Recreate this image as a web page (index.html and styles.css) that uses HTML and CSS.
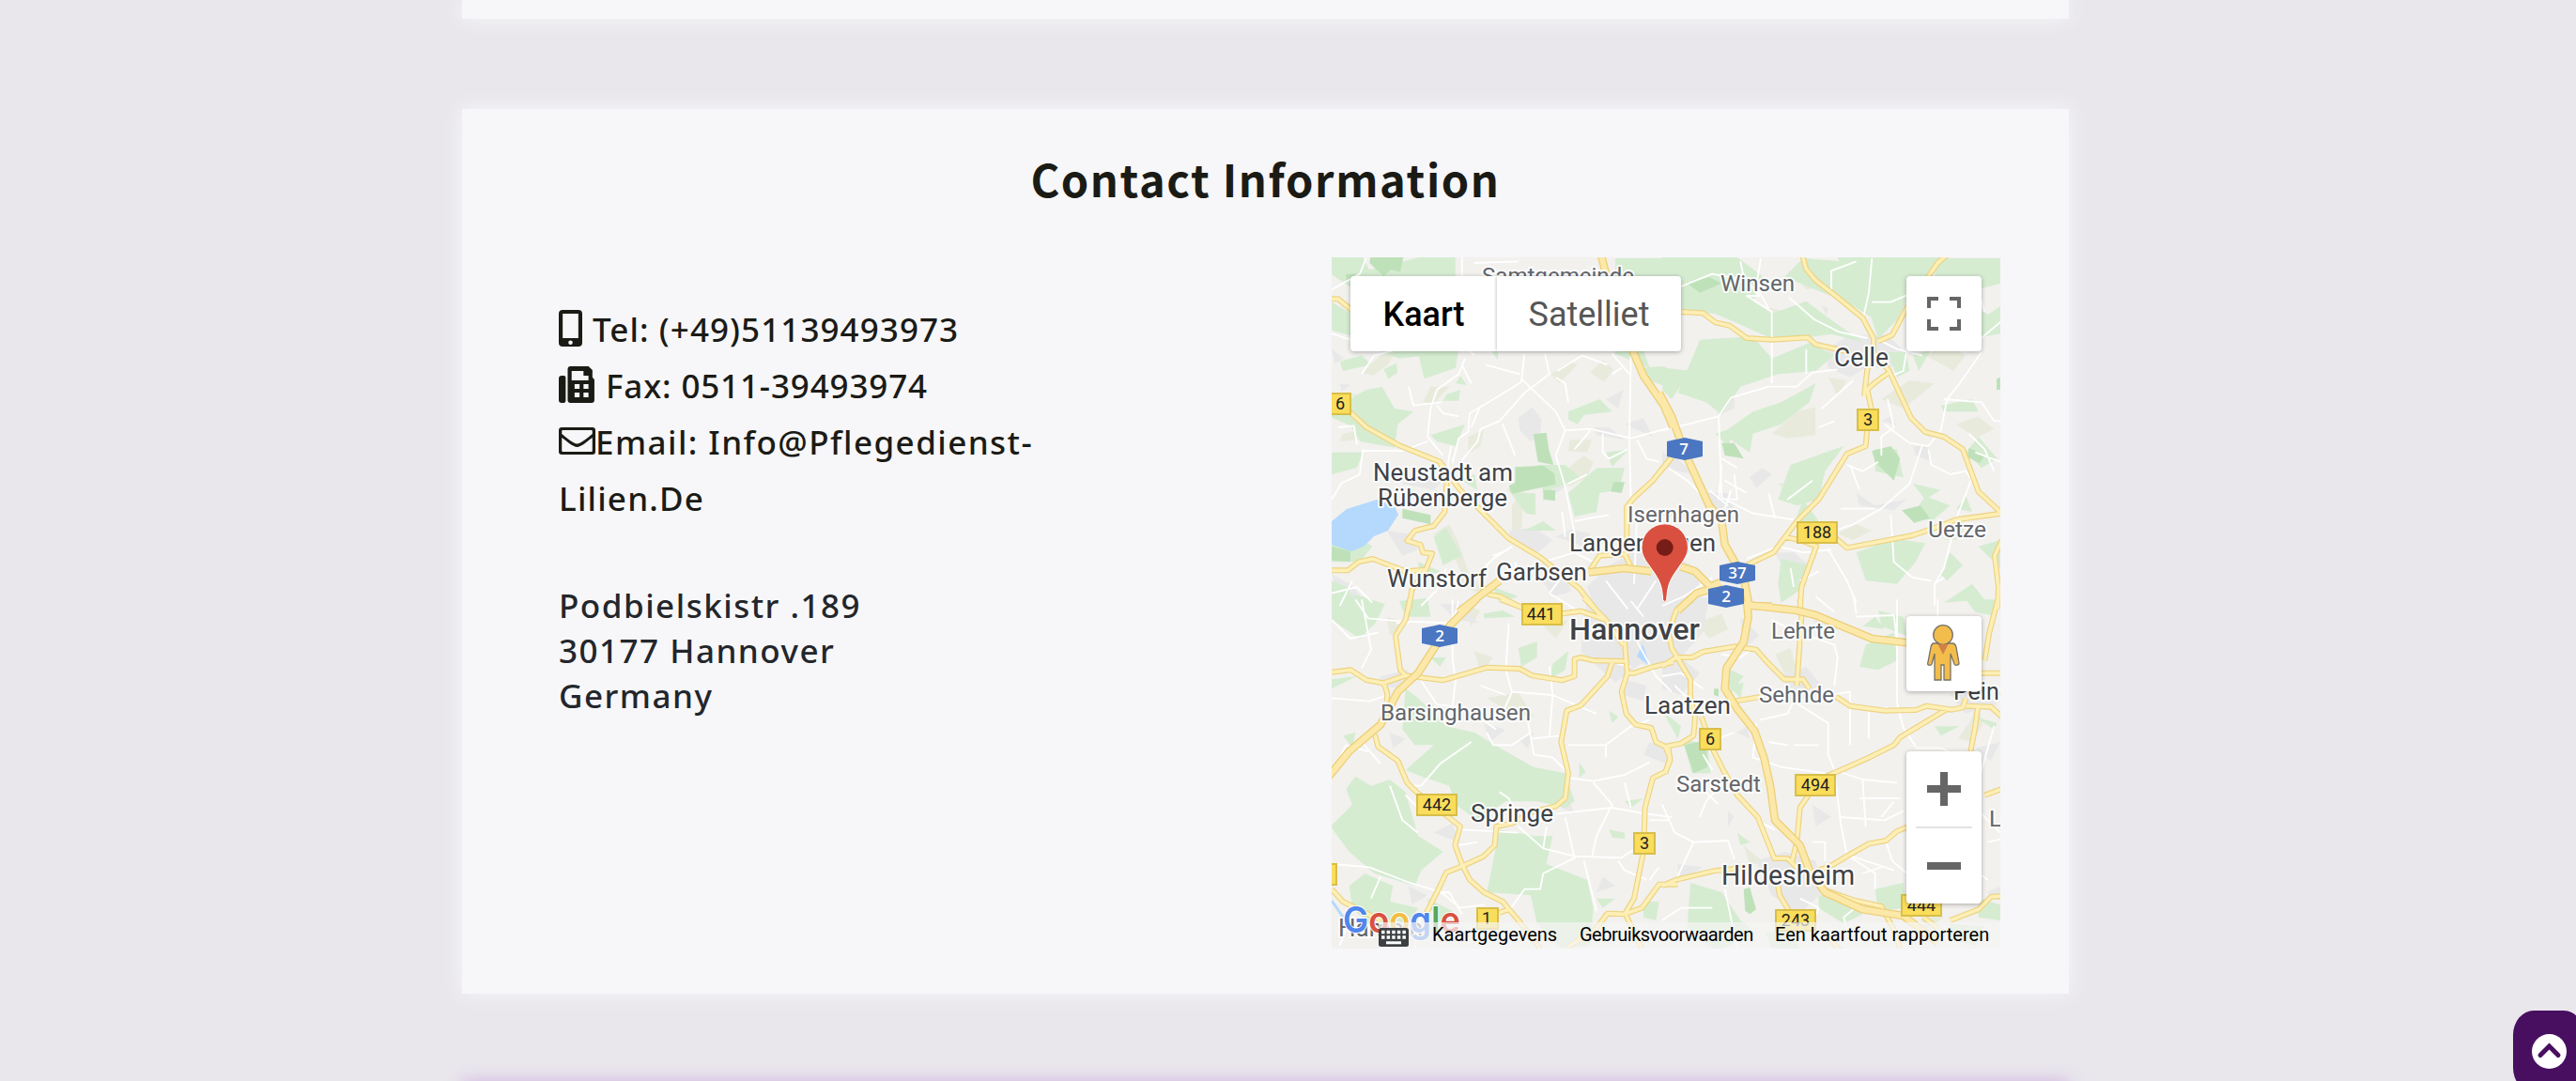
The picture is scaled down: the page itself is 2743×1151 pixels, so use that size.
FILE: index.html
```html
<!DOCTYPE html>
<html lang="en">
<head>
<meta charset="utf-8">
<title>Contact Information</title>
<link rel="stylesheet" href="styles.css">
</head>
<body>
<main class="page">
<section class="card card-previous"></section>
<section class="card card-contact">
<h2 class="title">Contact Information</h2>
<div class="columns">
<div class="details">
<p class="line tel"><svg class="icon" width="25" height="39" viewBox="0 0 24 39" preserveAspectRatio="none"><path fill-rule="evenodd" d="M4 0h16q4 0 4 4v31q0 4-4 4H4q-4 0-4-4V4q0-4 4-4zm0 4v26h16V4zm8 28.500a2.200 2.200 0 1 0 0 4.400 2.200 2.200 0 0 0 0-4.400z"/></svg><span class="tel-text">Tel: (+49)51139493973</span></p>
<p class="line fax"><svg class="icon" width="39" height="39" viewBox="0 0 37 39" preserveAspectRatio="none"><path d="M3 10h2q2 0 2 2v24q0 3-2 3H3q-3 0-3-3V13q0-3 3-3z"/><path fill-rule="evenodd" d="M12 0h18l4 4v8q2 1 2 3v21q0 3-3 3H12q-3 0-3-3V3q0-3 3-3zm1 5v10h17V10h-5V5zm3 14v5h5v-5zm9 0v5h5v-5zm-9 9v5h5v-5zm9 0v5h5v-5z"/></svg><span class="fax-text">Fax: 0511-39493974</span></p>
<p class="line mail"><svg class="icon" width="39" height="29" viewBox="0 0 36 29" preserveAspectRatio="none"><path fill-rule="evenodd" d="M3 0h30q3 0 3 3v23q0 3-3 3H3q-3 0-3-3V3q0-3 3-3zm1 3q-1 0-1 1v3c4 4 12 10.500 15 10.500S29 11 33 7V4q0-1-1-1zM3 11v14q0 1 1 1h28q1 0 1-1V11c-4 3-11 10-15 10S7 14 3 11z"/></svg><span class="mail-text">Email: Info@Pflegedienst-</span></p>
<p class="line host">Lilien.De</p>
<address class="address"><span class="street">Podbielskistr .189</span><br><span class="city">30177 Hannover</span><br><span class="country">Germany</span></address>
</div>
<div class="map">
<svg class="map-canvas" width="712" height="736" viewBox="0 0 712 736">
<defs>
<g id="main-roads">
<g transform="translate(-8 -9) scale(.33333)">
<path d="M0 160H45L100 205M60 500L135 570 240 628 370 680 430 765 590 925 690 985 815 1085 890 1180M370 680L392 740 385 840 350 885 290 900 265 932 308 945 315 970 345 973 325 1025 260 1030 155 990 110 1000 75 1027H0M325 1025L280 1090 270 1150M500 1075L530 1105 560 1110 640 1150M850 1025L880 980 960 975 980 1015M968 975L966 825 990 795 1050 740 1110 665"/>
</g>
<g transform="translate(352 -9) scale(.33333)">
<path d="M45 200L130 205 170 235 215 245 270 285 350 290 465 283 490 305 600 330M445 10L460 65 490 100 560 155 640 220 675 285 675 340 655 385 645 470M920 10L880 45 780 190 735 275 690 295M680 335L725 390 795 540 840 585 900 600 960 640 1010 775 1085 845 940 865 860 895 800 915 590 955 550 920M725 395L700 412 670 435 655 450 668 510 655 570 650 630 590 655 500 800 430 870 355 970 270 1010M390 920L440 930 492 950 445 1080 440 1150M1085 930L1062 980 1074 1080 1072 1150M-10 715L40 655"/>
</g>
<g transform="translate(-8 366) scale(.33333)">
<path d="M275-10L260 60 228 110 243 220 260 238 190 262 135 252 85 220 0 230M260 238L380 253 520 212 625 216 665 238 760 253 800 240 800 185 820 180 860 190 965 192M190 262L202 295 200 320M162 425L172 465 235 510 265 580 295 610 435 720 418 780 442 845 465 890 510 930 570 960 625 1025 690 1110M920 195L905 240 820 333 775 350 757 450 780 550 770 630 740 655 660 675 600 710 550 720 545 780 510 815 445 845 390 867 370 910 325 1000M960 130L968 230 950 290 965 360 995 395 1045 405 1060 450 1100 470 1105 510 1090 545 1050 565 1025 660 1020 800 990 950 960 1000 905 998 870 1045 780 1105M830-10L900 60 955 140M565-5L630 20 760 40 820 32 900 60M24 920L60 960 180 1020M965 1005L1015 1110M590 985L560 995M960 1000L1015 980 1070 905 1130 905M965 230L990 230 1050 210 1115 195"/>
</g>
<g transform="translate(352 366) scale(.33333)">
<path d="M440-5L445 50 430 270M95-5L45 30 20 100 30 150 90 250 90 310 105 370 100 430 60 455 10 465 25 500 10 550M0 208L45 180 95 180 130 162 230 145 300 155 340 200 390 250 450 250 470 280M230 320L320 305M555 305L600 335 710 350 810 348 845 335 925 347 960 340 970 310 M1085 370L1050 338 970 335M1008 340L1000 400 985 480M905 348L760 435 740 460 660 500 570 540 500 570 440 660 430 770 415 830M125 370L165 480 195 540 240 620 305 690 358 822 400 822 430 850M0 910L45 890 165 862 280 850M370 910L375 940 420 1015 M500 860L540 845 590 815 660 775 715 765 750 735 800 715M1085 600L1030 620M1072-5L1045 100 1030 190M1020 230H1085M1085 942L1050 945 1010 985 920 1020M510 920L610 955 700 975 740 1050 760 1110M880 1045L835 1010M520 1060L570 1120"/>
</g>
</g>
<g id="motorways">
<g transform="translate(-8 -9) scale(.33333)"><path d="M880 0L900 80M975 300L1020 405 1085 500 1115 570M430 1160L560 1060M845 1033L960 1020 1045 1030"/></g>
<g transform="translate(352 -9) scale(.33333)"><path d="M-10 460L30 535 72 650 150 820 190 870 200 945 260 1050 280 1150M60 1015L105 1030 155 1080 185 1065M50 1155L110 1100 180 1080M280 1140L350 1142"/></g>
<g transform="translate(-8 366) scale(.33333)"><path d="M490-10L400 80 345 160 300 230 235 290 180 395 80 480 15 560"/></g>
<g transform="translate(352 366) scale(.33333)"><path d="M270 0L275 50 260 130 205 215 200 280 240 345 295 415 325 500 345 590 360 700 440 780 470 860 520 930 640 985 770 1005 880 1090M270 12L430 30 490 45 670 120 800 135"/></g>
</g>
</defs>
<rect width="712" height="736" fill="#f2f1ee"/>

<g class="olive">
<g transform="translate(-8 -9) scale(.33333)"><path d="M30 60l70-35 20 40-60 35zM120 395l60-55 50-15-25 45-50 35zM340 440l60 0-50 55-35-5zM440 320l50-30 60-10-30 40zM725 400l60-40 25 10-60 60zM850 395l40-40 35 30-30 40zM180 500l50 40-50 30zM60 590l70-15 20 30-100 10zM460 600l50-20-10 50-40 25zM785 610l70 0-15 40-60-5zM780 700l50-40 30 20-20 50-60 30zM400 880l30 60 30 90 40 60-50-30-50-110-50-40zM600 820l40-60-10 130-30 20zM130 500l-50-40 70 10zM420 1050l50-10 50 70-50-20z"/></g>
<g transform="translate(352 -9) scale(.33333)"><path d="M20 70l100-25 90 10-80 40zM280 170l110 30-80 40zM350 590l80-70 60-15 0 90-90 10zM700 480l90-60 80 10-100 80zM530 410l60 10-30 50zM420 80l90-20 30 60-80 10zM840 340l70-30 60 30-40 50zM940 560l70-25 50 40-60 30zM370 750l60-10-20 50zM900 930l50-60 30 10-40 50zM560 910l60-30 50 20-60 30zM610 70l60 60-40 60zM0 850l60-20 50 40z"/></g>
<g transform="translate(-8 366) scale(.33333)"><path d="M440 10l60 20-30 50zM200 50l60 20-50 40zM480 160l60 20-40 50zM700 80l80-20-40 60zM520 310l100-20 50 80-70-10zM210 960l60 30-20 40z"/></g>
<g transform="translate(352 366) scale(.33333)"><path d="M110 70l80-30 20 50-60 30zM480 60l90 10-30 50zM260 780l60 50-40 15zM985 380l20-50 20 60-30 60-50-10zM360 170l50-20 20 70-40 10zM820 990l80 20-60 40z"/></g>
</g>
<g class="urban">
<g transform="translate(-8 -9) scale(.33333)"><path d="M620 540l45-35 30 40-5 45-30 25-35-35zM900 480l55-30-15 60zM910 1010l80-40 120 0v190H870l-30-80zM690 1050l80-15 20 60-60 15zM590 900l80-10 60 40-60 50-70-40zM740 920l50-25 60 15-20 40zM200 900l70 10 30 50-50 20zM250 750l40-30 90 20-30 30zM24 320l40 30-30 15zM50 430l35 5-30 20zM740 710l35 45-40 30zM860 570l50 0 50 40-90-15zM960 560l60-20 30 60zM24 1040l60 30 50 60-70 30z"/></g>
<g transform="translate(352 -9) scale(.33333)"><path d="M600 275l120 0 50 50-40 55-80 0-50 30-70-30-5-60zM160 480l70-30 0 60-50 20zM0 650l50 20 50 50-100-20zM140 780l70 0 20 50-70 10zM620 780l60 40 100-20-40 35-110-15zM700 550l30-15 20 30zM800 630l50 0 10 50-50-20zM280 730l40-30 30 20-50 45zM0 960l110 60 20 120H0zM360 970l60 0 50 40-80 20zM510 180l20 10-5 25z"/></g>
<g transform="translate(-8 366) scale(.33333)"><path d="M840-10h290v230l-120-20-80 60-110-100zM370 10l70 0 50 60-70-10zM180 240l90-20-20 60-80-10zM210 420l50 20-40 30zM620 440l50-20-20 50zM960 250l70 20-10 50-60-20zM1040 450l70 30-20 40-70-30zM350 740l60-30 20 60zM740 650l40-20 20 50zM890 880l40 30-60 20zM270 910l60 30-50 30zM510 390l70 20-50 40z"/></g>
<g transform="translate(352 366) scale(.33333)"><path d="M0-10h150l-20 110-70 80 60 50-60 70-60-20zM250 50l60 60-50 40zM370 240l90-30 50 60-80 30zM300 830l90-30 100 30 30 90-80 80-90-60zM50 840l80 10-80 50zM920 300l80-30 70 60-100 30zM480 650l60 40-50 30zM210 670l20 20-20 30zM240 420l30-20 10 40zM1000 470l80-20-30 60zM840 880l60 20-40 30zM1035 930l50-20v50z"/></g>
</g>
<g class="forest">
<g transform="translate(-8 -9) scale(.33333)"><path d="M24 27h100l20 40 160-40h115v80l-110 45-150-60-60 40-75-50zM24 170l60 35 90 100-60-20-90-25zM60 280l110 30 110-40 60 70-100 10zM300 330l130-10-10 60-100 35-10-40zM530 320l25 5 0 30zM120 340l30 30-90 20-10-30zM135 450l50-10 40 70 60 10-50 40-10 75-110-20-30-50-70-30 75-60zM340 595l110-35-30 70-60-15zM390 465l45-15-5 35-50 0zM435 405l20 30-35-5zM190 385l40-20 5 30-30 20zM780 520l100-40 40 40-90 10-20 30-30-15zM585 765l45 15 45 0 0 70-30-5zM680 690l90 0 50 40-120 50zM780 780l90-80 90 0-20 70-60 10-10 60-70 15zM900 650l75-10-55 55zM900 240l90 0 50 140-110-45zM24 650l100 0-20 50-80 20zM1000 380l90-5 20 70-60-20zM930 30h190v100l-100 20-90-40zM24 870l130 80-40 50-90 0zM350 920l40-30 50 90-60 30zM24 1060l50 20 40 80H24zM300 1000l70 30-60 30zM540 1080l80 30-60 20zM640 900l60-30 40 30zM440 740l40-20 10 50z"/></g>
<g transform="translate(352 -9) scale(.33333)"><path d="M0 27h240l80 60-30 80 60 40 110-40 80 60 100 70-100-25-70 10-130 0-80-35-90-40-170-10zM120 290l170-10 60 70 120-50 80 40-60 50-120 10-120 40-60 90-50-40-90-30zM390 90l60-60 120 10 90 80 10 100-80-50zM560 27h330l-100 120-40 80-60 60-30-90-60-70zM880 30h200v80l-150 40-60-60zM980 170l60 40 45-30v90l-110 20zM290 520l90-30 110-60-20 60-90 70-90 30-10 60-90-60zM10 380l80 10-60 90-30-30zM720 330l60 0 10 60-40 20zM800 340l60-20-40 70zM410 690l110-40 60-20-60 80-20 90-70 20-60-20zM680 640l70 0 20 90-90-20zM890 500l100-20 20 40-110 0zM970 650l40-50 60 70-50 30zM800 750l90 20-50 30zM840 790l80 30-60 50-60-20zM620 970l80-30 70-10 70 10-30 60-60 70-100-10-20-60zM380 990l90 20-30 80-60 40-10-60zM920 970l40 40-50 50-20-20zM450 800l50 70-80 10zM940 830l30-40 20 50zM1010 950l70-20v90zM170 590l60-20-20 60zM900 1130l90-60 40 50z"/></g>
<g transform="translate(-8 366) scale(.33333)"><path d="M24 10l80-30 90 30-30 60-50 50-90-60zM240 0l90-10 10 60-80 0zM260 280l40 30 90 90 90 20 100 60 90 50 100 20 30 90-30 20-90-20-100 0-90 60-70-50-20-60-90-30-50-20 90-80-60 0-40-50zM100 560l50 30 60-20 50 40 40 140 80 50-70 60-20 50-130-40-80-70-60-80 70-70-20-50zM560 730l110 20 60 0-20 90 130 50 20 90-10 120-90 10-80-80-20-90-140-10zM80 910l50-40 90 40-10 50 90 20-30 50-130 0-50-50zM870 950l60 0-40 30zM910 350l30 20-20 20zM620 150l60-20 0 50-50 30zM730 200l50-40-10 60-50 30zM510 40l60-10 40 20-100 5zM340 180l50 0-20 30zM60 430l40-10-10 50zM24 250l80-10-80 40zM815 515l20 30-20 20zM960 640l60-10-40 30zM1020 960l50 0-10 60-40-10zM330 950l80 40-50 40zM910 730l50 10 0 20-40-5z"/></g>
<g transform="translate(352 366) scale(.33333)"><path d="M650 140l90-40 10 90-60 30-60-10zM690 30l80 20 10 60-80-30zM200 210l60 30-40 50zM0 350l60 50-10 40zM65 440l80 20 10 90-60 0zM90 900l100 30 60 90 50 40-130 60-90-80zM500 940l90 0 50 60-60 30-80-50zM680 920l90-20 10 80-90 10zM1000 370l70 20-10 20zM870 400l80 0-60 30zM240 740l40 30-30 10zM640 80l40-30 30 40zM330 1060l80-10 30 60h-90zM920 1030l110 10-30 60-80-20zM1010 950l70 20v50l-70-10zM210 270l50-10-10 50zM970-5l100 0-20 50-50-10z"/></g>
</g>
<g class="deep-forest">
<g transform="translate(-8 -9) scale(.33333)"><path d="M148 27h105l-10 47-30-8-23 22-45-43zM668 592l42-5 8 55 15 48-50-10zM610 697l90-5 35 25 5 35-140 30-10-25 20-10zM700 770h38v35l-38-5zM925 745l35 0-10 35-35-5zM250 830l90 20 0 30-90-20zM24 950l60 15 0 35-60-5zM70 80l40 0-40 30z"/></g>
<g transform="translate(352 -9) scale(.33333)"><path d="M670 645l60-15 30 40-20 70-60-60zM190 620l40 0 30 50-60-10zM765 835l60-15 30 40-50 15zM980 635l50 25-15 25-40-20zM80 110l70-20 40 20-70 30zM1068 415l15-5v40l-15 0z"/></g>
<g transform="translate(352 366) scale(.33333)"><path d="M70 460l70-15 5 85-45 20zM260 920l20-5 20 70-20 15-15-10zM165 280l15 0 0 25-15-5z"/></g>
</g>
<g class="water"><path d="M0 281L16 268 48 258 67 265 71 274 60 291 45 297 34 308 21 313 0 306zM325 425l6-13 4 11 4 12z"/><path d="M0 685l5 7 8 12" class="stream"/></g>

<g class="lanes">
<g transform="translate(-8 -9) scale(.33333)"><path d="M24 130l90-50 20-50M24 270l120 40M120 400l40-60 80-20M480 45l140-5M440 90l0-70M450 350l-20 50-70 50-20 60-10 90 50 60M270 440l15 60 90-10M640 335l-10 90-80 50-85 50-5 60-30 20-20 80M630 415l110 105 30 60 80-5 130 30 130-35M720 400l-80 60-80 90-60 25-10 40-50 60M705 335l15 65M980 340l-5 260 5 220M770 580l-30 80 30 100 30 150M515 370l110 30M360 500l20 25 50 10M920 335l55 65M120 645l130 0 80-30M24 800l30-50 60-30 10-80M405 630l-10 60 20 60M570 560l40 100M745 390l80-50 80 30M480 340l-30-30M45 570l50-5 10 60M890 590l0 60 20 20 60-30M1000 610l30 60 40 10M850 580l-50 60M470 570l30-70M800 870l50-10 60-10M700 1000l100-30 60 30M760 840l10 80M600 950l-60 40-80 80M1000 840l-10 230M780 1020l-60 80M24 1100l80-20 50 50M90 1060l-40 80M390 1020l-30 70-50 50M720 1100l80 50M540 980l50-20M740 410l30 20 10 60M840 720l-60 30M920 400l30-20M440 370l30 60M610 1000l10 50M1060 1060l-60 90M900 1060l70 90"/></g>
<g transform="translate(352 -9) scale(.33333)"><path d="M250 40l10 50 50 60-40 0 80 50 0 230M315 30l-15 90 40 70M60 120l100-40 110 20M405 155l80 70 80 40 90 20M670 30l-10 110-20 90M540 130l0-60 80-30M0 580l180-45 40-60 120-35 90 0 50-45 80-10M180 535l10 260 100 50 130 20M690 290l60 30 80 20M780 330l-10 60-50 20M1085 230l-60 50-60 50M1020 330l-70 100-40 50-20 100-40 50-60-10-80-60M830 630l-40 120-90 80-90 50-60 20M610 420l-100 90M460 320l0 80M850 640l10 50 60 30 50-10 20 30M720 480l20 90-40 30 0 60M900 480l120 10 40 60 25 0M270 990l100-40 80 20 90-10M530 960l60 100 30 70M900 1050l-30 20 0 70M990 730l-50 130-40 160-30 50M730 850l10 150 60 50 60 10M20 700l60 40 60 60M200 800l40 0-10-80M190 690l-10 110M400 800l80-60M600 690l30 80M150 770l60 50M570 830l110 0M690 680l-50 30-50-20M980 590l50 50 30 70M1000 650l80 30M0 1140l70-30 90-60M200 830l20-60M360 860l-20-80M440 1060l60-30M550 550l-50 20M1000 100l30 100M800 140l-70 30-60 0M420 1080l-10-60M240 700l-50-30M270 780l-70-40M490 1110l60 50"/></g>
<g transform="translate(-8 366) scale(.33333)"><path d="M24 60l60 60 90-20M100-5l40 60 110 10 160 5 20-70M270 70l-40 0M410-5l0 190 10 70-10 80M300 240l60 90 90 10 100 70M590 70l-10 150 20 70-40 90M600 290l130 10 140 60M720 210l10 90-10 130M650 380l20 110 60 10 40 40M24 310l120 10 60-20M140 480l-70-20-50 100M470 450l-100 70-60 70-30 0M620 720l80 70 100 25 150 5 60-40M710 720l-10 70M770 690l30 130-100 50-10 50-50 0-50 70M780 565l80 10 100-20 80-40M860 580l60 70-50 100-15 70M740 680l180-20 110 20 80 10M24 840l120 10 130 50 100 30 60 50 80-10M360 930l40 0 40 70M830 830l40 160M940 830l20 30 70 30M520 420l20 40 60 0 60-40M660 440l90-10M780 460l120 0 0 40M620 740l-180-10M900 460l80-60 60-20M500 270l80 30M180 880l-30 70M210 590l40 110 50 40M260 620l60 60M980 660l-20-80M120-5l30 160-30 60M1070 850l-30 40M1100 700l-60 0M900 190l80 20M430 780l60-10M180 520l-60-70M560 610l30 20 20 50M310 1000l-20 110M80 1020l-30 80M1000 130l60 110 50 50M980 0l40 50"/></g>
<g transform="translate(352 366) scale(.33333)"><path d="M350 60l60 30 140 50 10 40-10 90M620 50l120-5 10 80 0 200 20 80 40 60M620 40l-10-60M750-5l0 120M310 380l90-20 20-40 110 70 0 100 20 50 20 170 20 100 150 50M300 390l-10 110 90 30 140 20M600 310l0 150M660 440l0-90 60-10M810 470l80 0 90 40M550 540l90 30 110 10M640 570l10 150M570 690l140 10 60-30M630 630l130 0M480 770l40 0 0 60M715 770l20 60 70 60M590 810l90 60 0 50M120 690l20-50 70-80M40 740l60 30 110-5 20 60M0 650l40 90M100 770l-60 130M180 650l-60-60-70-20M200 920l40 190M300 700l60 30M150 450l80-30M130 490l30 50M0 240l60-10 70 50M40 270l60 60M840 700l0 110 60 0M1020 680l60 60M1060 400l-40 140-30 100M1040 770l45-10M1010 870l30 20M920 700l-60 50M740 640l-40 50M420 460l80 0M340 450l60 10M0 1020l60-40 100 0M640 960l-60 50 20 80M440 950l60 30-20 50M290 150l-40 30-60-10M450 130l-60-20M880 -5l0 70M540 300l60-10 0 40M700 850l-60 20"/></g>
</g>
<use href="#main-roads" class="casing"/>
<use href="#main-roads" class="surface"/>
<use href="#motorways" class="casing-wide"/>
<use href="#motorways" class="surface-wide"/>

<g class="towns">
<text x="44" y="238" textLength="149" lengthAdjust="spacingAndGlyphs">Neustadt am</text>
<text x="49" y="265" textLength="138" lengthAdjust="spacingAndGlyphs">Rübenberge</text>
<text x="59" y="351" textLength="106" lengthAdjust="spacingAndGlyphs">Wunstorf</text>
<text x="175" y="344" textLength="97" lengthAdjust="spacingAndGlyphs">Garbsen</text>
<text x="253" y="313" textLength="156" lengthAdjust="spacingAndGlyphs">Langenhagen</text>
<text x="535" y="116" textLength="58" font-size="27" lengthAdjust="spacingAndGlyphs">Celle</text>
<text x="148" y="601" textLength="88" lengthAdjust="spacingAndGlyphs">Springe</text>
<text x="333" y="486" textLength="92" lengthAdjust="spacingAndGlyphs">Laatzen</text>
<text x="662" y="471" textLength="62" lengthAdjust="spacingAndGlyphs">Peine</text>
<text x="415" y="668" textLength="142" font-size="29" lengthAdjust="spacingAndGlyphs">Hildesheim</text>
<text x="253" y="407" textLength="139" font-size="32" font-weight="500" lengthAdjust="spacingAndGlyphs">Hannover</text>
</g>
<g class="villages">
<text x="160" y="28" textLength="162" lengthAdjust="spacingAndGlyphs">Samtgemeinde</text>
<text x="414" y="36" textLength="79" lengthAdjust="spacingAndGlyphs">Winsen</text>
<text x="315" y="282" textLength="119" lengthAdjust="spacingAndGlyphs">Isernhagen</text>
<text x="635" y="298" textLength="62" lengthAdjust="spacingAndGlyphs">Uetze</text>
<text x="52" y="493" textLength="160" lengthAdjust="spacingAndGlyphs">Barsinghausen</text>
<text x="468" y="406" textLength="68" lengthAdjust="spacingAndGlyphs">Lehrte</text>
<text x="455" y="474" textLength="80" lengthAdjust="spacingAndGlyphs">Sehnde</text>
<text x="367" y="569" textLength="90" lengthAdjust="spacingAndGlyphs">Sarstedt</text>
<text x="700" y="606">L</text>
<text x="7" y="723" textLength="90" font-size="26" lengthAdjust="spacingAndGlyphs">Hameln</text>
</g>
<g class="road-signs">
<rect x="-4" y="145" width="24" height="22"/><text x="9" y="162">6</text>
<rect x="560" y="162" width="22" height="22"/><text x="571" y="179">3</text>
<rect x="496" y="282" width="42" height="22"/><text x="517" y="299">188</text>
<rect x="203" y="369" width="42" height="22"/><text x="223" y="386">441</text>
<rect x="91" y="572" width="42" height="22"/><text x="112" y="589">442</text>
<rect x="322" y="613" width="22" height="22"/><text x="333" y="630">3</text>
<rect x="155" y="693" width="22" height="22"/><text x="165" y="710">1</text>
<rect x="-4" y="646" width="9" height="22"/>
<rect x="392" y="502" width="22" height="22"/><text x="403" y="519">6</text>
<rect x="494" y="551" width="42" height="22"/><text x="515" y="568">494</text>
<rect x="473" y="695" width="42" height="22"/><text x="494" y="712">243</text>
<rect x="607" y="679" width="42" height="22"/><text x="628" y="696">444</text>
</g>
<g class="motorway-signs">
<path d="M357 196l19-4 19 4v16l-19 4-19-4zM413 328l19-4 19 4v16l-19 4-19-4zM401 353l19-4 19 4v16l-19 4-19-4zM96 395l19-4 19 4v16l-19 4-19-4z"/>
<text x="375" y="210">7</text><text x="432" y="342">37</text><text x="420" y="367">2</text><text x="115" y="409">2</text>
</g>
<path d="M352.700 365C352 346 347 341 338 328 332 320 330 315 330 308.500a24.700 24.700 0 0 1 49.400 0C379.400 315 377 320 371 328 362 341 357.500 346 356.700 365q-2 3-4 0z" fill="#d95040" stroke="#fff" stroke-width="1"/>
<circle cx="354.700" cy="309" r="9" fill="#751d16"/>
<text class="logo" x="12" y="719" textLength="125" lengthAdjust="spacingAndGlyphs"><tspan fill="#5186ec">G</tspan><tspan fill="#d95140">o</tspan><tspan fill="#f1be42">o</tspan><tspan fill="#5186ec">g</tspan><tspan fill="#58a65c">l</tspan><tspan fill="#d95140">e</tspan></text>
</svg>
<div class="map-types"><span class="type active">Kaart</span><span class="type">Satelliet</span></div>
<div class="control fullscreen"><svg width="36" height="36" viewBox="0 0 36 36"><path d="M0 0h12v4H4v8H0zM24 0h12v12h-4V4h-8zM0 24h4v8h8v4H0zM32 24h4v12H24v-4h8z" fill="#666"/></svg></div>
<div class="control pegman"><svg width="36" height="62" viewBox="0 0 36 62"><g fill="#f3bd4b" stroke="#777267" stroke-width="1.300"><path d="M7 20h20q3 0 4 4l3 17q0 2-2 2-2 1-3-1l-4-11v28H18V43h-3v16H8V31L5 42q-1 2-3 1-2 0-1-3l3-16q1-4 3-4z"/><circle cx="17" cy="11" r="10.300"/></g><path d="M11.500 21h11L17 32z" fill="#d18147"/></svg></div>
<div class="control zoom"><button class="zoom-button" aria-label="Inzoomen"><svg width="36" height="36" viewBox="0 0 36 36"><path d="M14 0h8v14h14v8H22v14h-8V22H0v-8h14z" fill="#666"/></svg></button><button class="zoom-button" aria-label="Uitzoomen"><svg width="36" height="8" viewBox="0 0 36 8"><path d="M0 0h36v8H0z" fill="#666"/></svg></button></div>
<div class="credits"><svg width="32" height="20" viewBox="0 0 32 20"><rect width="32" height="20" rx="2.500" fill="#3c4043"/><path d="M3 4.500h26M3 10h26" stroke="#fff" stroke-width="3.600" stroke-dasharray="3.500 2.100"/><path d="M8 15.800h16" stroke="#fff" stroke-width="3"/></svg><span class="data">Kaartgegevens</span><span class="terms">Gebruiksvoorwaarden</span><span class="report">Een kaartfout rapporteren</span></div>
</div>
</div>
</section>
<section class="card card-next"></section>
</main>
<a class="to-top" href="#" aria-label="Top"><svg width="37" height="37" viewBox="0 0 37 37"><circle cx="18.500" cy="18.500" r="18.500" fill="#fff"/><path d="M9 22.500l9.500-9.500 9.500 9.500" fill="none" stroke="#480f60" stroke-width="5" stroke-linecap="round"/></svg></a>
</body>
</html>
```

FILE: styles.css
```css
* { box-sizing: border-box; }
body {
  margin: 0;
  height: 1151px;
  overflow: hidden;
  background: #e9e7ec;
  color: #1b1b16;
  font-family: "Noto Sans", sans-serif;
}
.page {
  display: flex;
  flex-direction: column;
  gap: 96px;
  width: 1711px;
  margin-left: 492px;
}
.card {
  flex: none;
  background: #f7f7f9;
  box-shadow: 0 0 20px #f7f7f9;
}
.card-previous { height: 20px; }
.card-contact { height: 942px; }
.card-next { height: 80px; box-shadow: 0 0 20px #c9a3dc; }
.title {
  margin: 0;
  padding-top: 41px;
  height: 158px;
  text-align: center;
  font: 700 47px/66px "Noto Sans CJK SC", sans-serif;
  letter-spacing: 1.600px;
}
.columns {
  display: flex;
  justify-content: space-between;
  padding: 0 73px 0 103px;
}
.details { padding-top: 47px; font-size: 35px; font-weight: 500; white-space: nowrap; }
.line {
  display: flex;
  align-items: flex-start;
  margin: 0;
  height: 60px;
  line-height: 60px;
}
.icon { flex: none; fill: #1b1b16; }
.tel .icon { margin-top: 9px; }
.fax .icon { margin-top: 9px; }
.mail .icon { margin-top: 14px; }
.tel-text { margin-left: 11px; letter-spacing: 1.080px; }
.fax-text { margin-left: 11px; letter-spacing: .850px; }
.mail-text { margin-left: 0; letter-spacing: 1.450px; }
.host { letter-spacing: 1.200px; }
.address { margin-top: 60px; font-style: normal; line-height: 48px; color: #23262b; letter-spacing: 1.500px; }
.map {
  position: relative;
  width: 712px;
  height: 736px;
  overflow: hidden;
  font-family: Roboto, sans-serif;
}
.map-canvas { display: block; }
.olive { fill: #e8ebdc; }
.urban { fill: #e8e8e8; }
.forest { fill: #d5ecd1; }
.deep-forest { fill: #bfe1ba; }
.water { fill: #b4d9fd; }
.stream { fill: none; stroke: #b4d9fd; stroke-width: 3; }
.lanes { fill: none; stroke: #fff; stroke-width: 5.500; stroke-linejoin: round; }
.casing, .surface, .casing-wide, .surface-wide { fill: none; stroke-linejoin: round; }
.casing { stroke: #edd282; stroke-width: 18; }
.surface { stroke: #fdefb5; stroke-width: 11; }
.casing-wide { stroke: #edcf79; stroke-width: 26; }
.surface-wide { stroke: #fce9a9; stroke-width: 18; }
.towns, .villages {
  font-size: 25.500px;
  stroke: #fff;
  stroke-opacity: .85;
  stroke-width: 4px;
  stroke-linejoin: round;
  paint-order: stroke;
}
.towns { fill: #3f4246; }
.villages { font-size: 24.500px; fill: #63666b; }
.road-signs rect { fill: #f9dd5b; stroke: #d8be49; stroke-width: 2; }
.road-signs text { font-size: 18px; text-anchor: middle; fill: #222; }
.motorway-signs { fill: #4a76c2; }
.motorway-signs text { font: 600 17px "Open Sans", sans-serif; fill: #fff; text-anchor: middle; }
.logo { font: 600 38px Inter, sans-serif; stroke: #fff; stroke-width: 2px; paint-order: stroke; }
.map-types {
  position: absolute;
  left: 20px;
  top: 20px;
  display: flex;
  width: 352px;
  height: 80px;
  border-radius: 4px;
  background: #fff;
  box-shadow: 0 1px 5px rgba(0, 0, 0, .3);
}
.type {
  width: 196px;
  text-align: center;
  font-size: 36px;
  line-height: 82px;
  color: #565656;
  box-shadow: -2px 0 3px -1px rgba(0, 0, 0, .2);
}
.type.active { width: 156px; font-weight: 500; color: #000; box-shadow: none; }
.control {
  position: absolute;
  left: 612px;
  width: 80px;
  height: 80px;
  display: flex;
  align-items: center;
  justify-content: center;
  border-radius: 4px;
  background: #fff;
  box-shadow: 0 1px 5px rgba(0, 0, 0, .3);
}
.fullscreen { top: 20px; }
.pegman { top: 382px; }
.zoom { top: 526px; height: 162px; flex-direction: column; }
.zoom-button {
  display: flex;
  align-items: center;
  justify-content: center;
  width: 60px;
  height: 80px;
  padding: 0;
  border: 0;
  background: none;
}
.zoom-button + .zoom-button { height: 82px; border-top: 2px solid #e3e3e3; }
.credits {
  position: absolute;
  left: 50px;
  right: 0;
  bottom: 0;
  height: 28px;
  display: flex;
  align-items: center;
  background: rgba(245, 245, 245, .7);
  color: #000;
  font-size: 20px;
  line-height: 26px;
  padding-bottom: 2px;
  white-space: nowrap;
}
.credits svg { margin: 6px 0 0; }
.data { margin-left: 25px; width: 157px; }
.terms { width: 208px; letter-spacing: -.500px; }
.to-top {
  position: fixed;
  left: 2676px;
  top: 1076px;
  width: 76px;
  height: 87px;
  display: flex;
  align-items: center;
  justify-content: center;
  border-radius: 22px / 26px;
  background: #480f60;
}
```
